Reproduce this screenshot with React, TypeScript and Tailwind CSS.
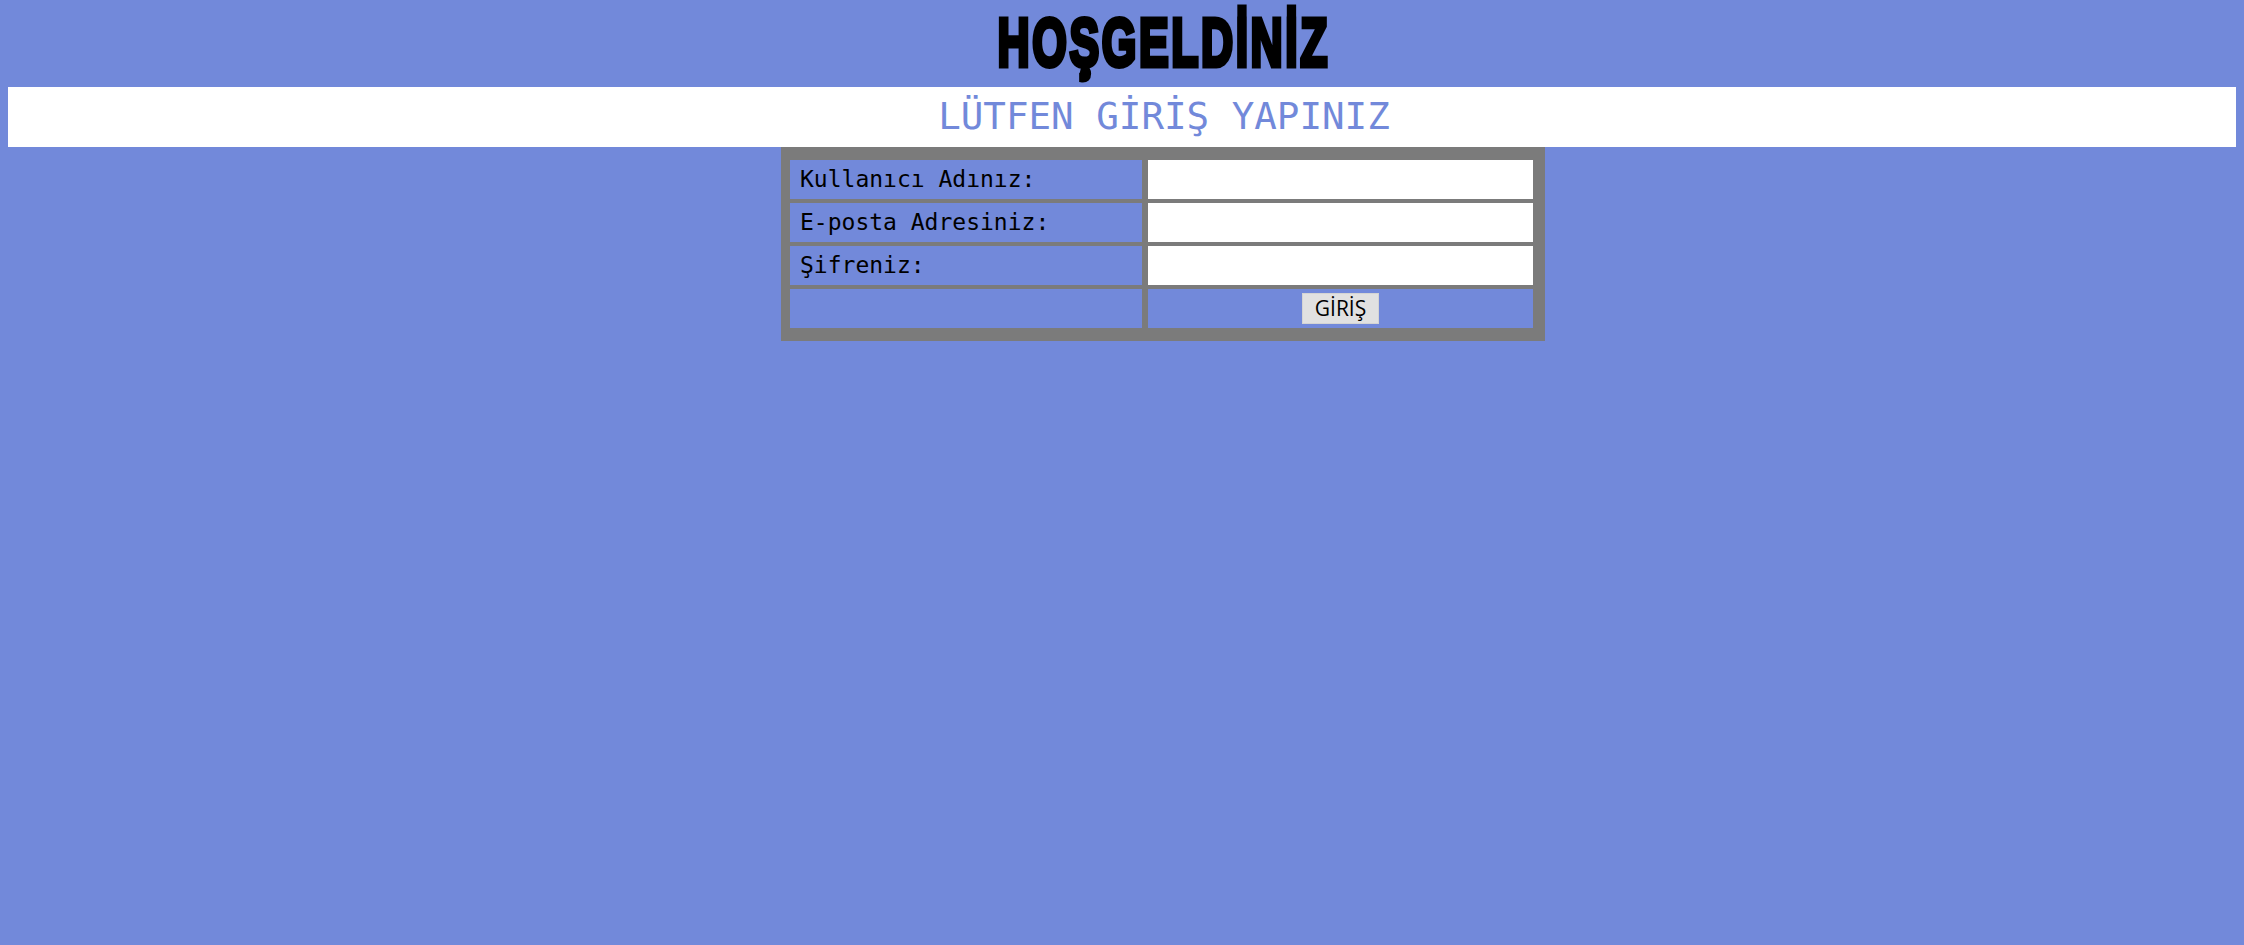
const mono = "font-['DejaVu_Sans_Mono','Liberation_Mono',monospace]";

function LabelCell({ text }: { text: string }) {
  return (
    <div className={`bg-[#7289da] flex items-center pl-[10px] text-[23px] leading-none text-black ${mono}`}>
      {text}
    </div>
  );
}

function InputCell({ type }: { type: string }) {
  return (
    <div className="bg-[#7289da] flex">
      <input type={type} className="w-full h-full bg-white outline-none border-0" />
    </div>
  );
}

export default function App() {
  return (
    <div className="min-h-screen bg-[#7289da]">
      <div className="h-[87px] flex justify-center pl-[83px] pt-[8px]">
        <h1 className="inline-block origin-center scale-x-[0.645] text-[69px] leading-none font-bold text-black font-['Liberation_Sans',Arial,sans-serif] [-webkit-text-stroke:5px_black] tracking-[4px]">
          HOŞGELDİNİZ
        </h1>
      </div>

      <div className="mx-[8px] h-[60px] bg-white flex items-center justify-center pl-[84px]">
        <h2 className={`text-[37.5px] leading-none text-[#7289da] ${mono}`}>LÜTFEN GİRİŞ YAPINIZ</h2>
      </div>

      <div className="flex justify-center pl-[82px]">
        <form
          onSubmit={(e) => e.preventDefault()}
          className="bg-[#7b7b7b] pl-[9px] pt-[13px] pr-[12px] pb-[13px] grid grid-cols-[352px_385px] grid-rows-[repeat(4,39px)] gap-x-[6px] gap-y-[4px]"
        >
          <LabelCell text="Kullanıcı Adınız:" />
          <InputCell type="text" />
          <LabelCell text="E-posta Adresiniz:" />
          <InputCell type="email" />
          <LabelCell text="Şifreniz:" />
          <InputCell type="password" />
          <div className="bg-[#7289da]" />
          <div className="bg-[#7289da] flex items-center justify-center">
            <button
              type="submit"
              className="h-[31px] px-[12px] bg-[#e1e1e1] border border-[#d4d4d4] text-black text-[21px] leading-none font-['Open_Sans','Noto_Sans',sans-serif]"
            >
              GİRİŞ
            </button>
          </div>
        </form>
      </div>
    </div>
  );
}
